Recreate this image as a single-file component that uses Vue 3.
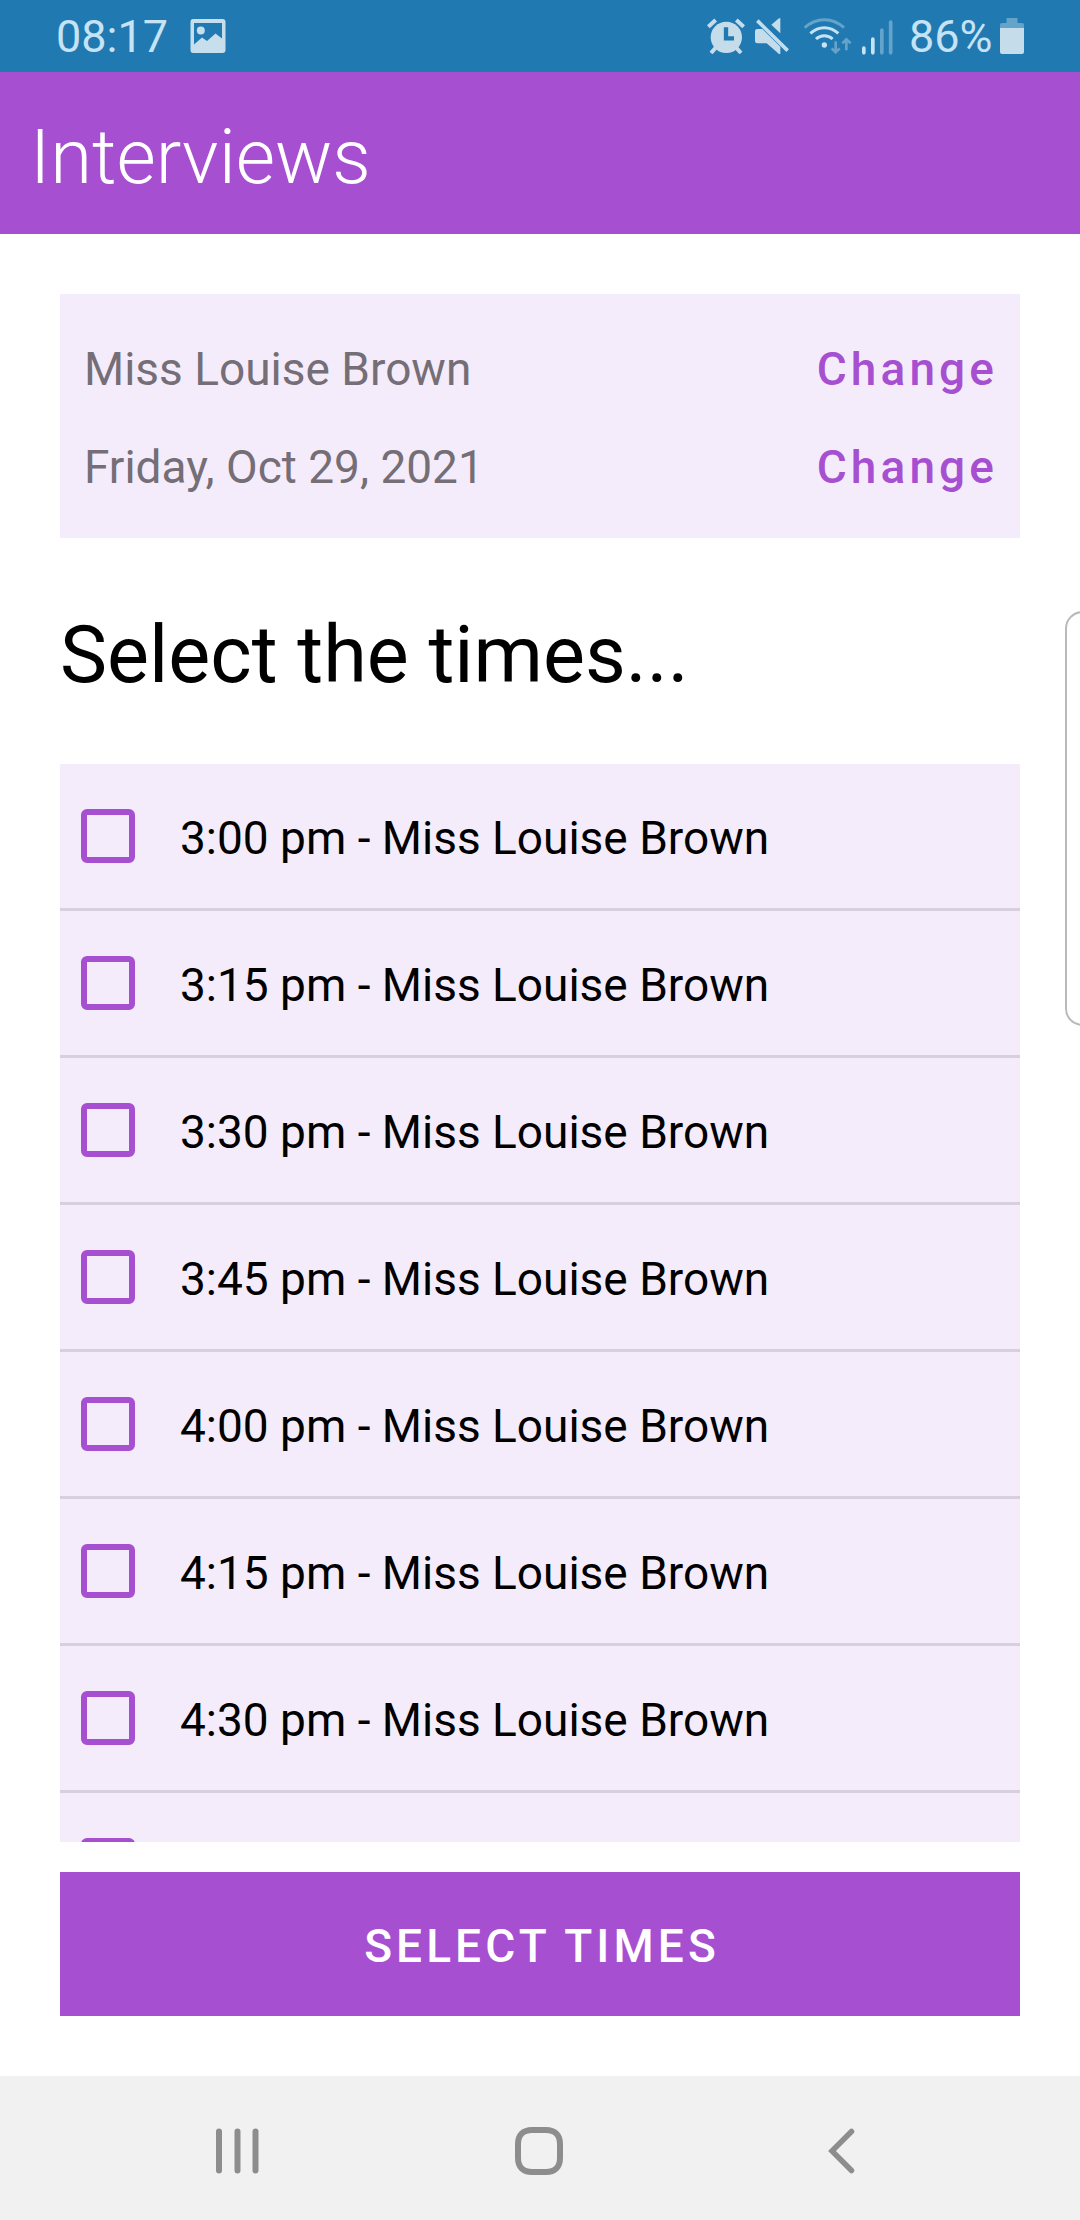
<script setup>
const details = ['Miss Louise Brown', 'Friday, Oct 29, 2021']
const slots = ['3:00', '3:15', '3:30', '3:45', '4:00', '4:15', '4:30', '']
</script>

<template>
  <div class="screen">
    <header class="status">
      <span class="clock">08:17</span>
      <svg class="picture" width="36" height="34" viewBox="0 0 36 34">
        <path fill="#c7deec" fill-rule="evenodd" d="M3 0H32.500Q35.500 0 35.500 3V31Q35.500 34 32.500 34H3Q.5 34 .5 31V3Q.5 0 3 0ZM4 4V25.500L12 18.500L17 22L25.500 14.500L32 19.500V4Z" />
        <circle cx="10.800" cy="11.500" r="4" fill="#c7deec" />
      </svg>
      <span class="grow"></span>
      <svg class="alarm" width="38" height="36" viewBox="51 53 114 108" fill="none" stroke="#c5dcea">
        <circle cx="109" cy="111" r="47" fill="#c5dcea" stroke="none" />
        <path stroke-width="12" d="M55 79L77 59M161 79L139 59M63 158L78 141M153 158L138 141" />
        <path stroke="#2179b1" stroke-width="13" d="M108 81V114H132" />
      </svg>
      <svg class="mute" width="34" height="36" viewBox="195 53 102 108">
        <path fill="#c5dcea" d="M202 86H217L271 139V161H267L230 129H202Q195 129 195 122V93Q195 86 202 86ZM267 54H271V99L244 73Z" />
        <path fill="none" stroke="#c5dcea" stroke-width="11" d="M202 61L293 151" />
      </svg>
      <svg class="wifi" width="48" height="36" viewBox="342 53 144 108" fill="none">
        <g stroke="#64a3ca" stroke-width="9">
          <path d="M344 82Q370 58 403 58T462 82" />
          <path d="M437 123V154M425 144L437 156L449 144M469 150V119M457 129L469 117L482 129" stroke-width="8" />
        </g>
        <g stroke="#c5e3f5" stroke-width="9">
          <path d="M361 99Q380 82 403 82T445 99M378 116Q389 106 403 106T428 116" />
        </g>
        <circle cx="403" cy="134" r="8" fill="#c5e3f5" />
      </svg>
      <svg class="signal" width="31" height="35" viewBox="515 59 93 104" stroke-width="11" stroke-linecap="round">
        <path stroke="#c5e3f5" d="M520.500 143V157M547.500 116V157" />
        <path stroke="#64a3ca" d="M574.500 89V157M601 65V157" />
      </svg>
      <span class="percent">86%</span>
      <svg class="battery" width="24" height="36" viewBox="0 0 24 36">
        <path fill="#64a3ca" d="M6.500 0H17.500V5H22Q24 5 24 7V10H0V7Q0 5 2 5H6.500Z" />
        <path fill="#c5dcea" d="M0 10H24V34Q24 36 22 36H2Q0 36 0 34Z" />
      </svg>
    </header>
    <div class="appbar"><h1>Interviews</h1></div>
    <main>
      <section class="card">
        <div v-for="d in details" :key="d" class="detail">
          <span>{{ d }}</span>
          <button class="change">Change</button>
        </div>
      </section>
      <h2><span>Select the times...</span></h2>
      <ul class="slots">
        <li v-for="s in slots" :key="s">
          <i class="box"></i>
          <span v-if="s">{{ s }} pm - Miss Louise Brown</span>
        </li>
      </ul>
      <button class="submit"><span>SELECT TIMES</span></button>
    </main>
    <nav>
      <svg class="recents" width="43" height="46" viewBox="0 0 43 46" stroke="#8d8d8d" stroke-width="6" stroke-linecap="round"><path d="M3 3.500V42.500M21.500 3.500V42.500M39.500 3.500V42.500" /></svg>
      <svg class="home" width="48" height="48" viewBox="0 0 48 48" fill="none" stroke="#8d8d8d" stroke-width="6"><path d="M17 3H31C40 3 45 8 45 17V31C45 40 40 45 31 45H17C8 45 3 40 3 31V17C3 8 8 3 17 3Z" /></svg>
      <svg width="27" height="46" viewBox="0 0 27 46" fill="none" stroke="#8d8d8d" stroke-width="5.500" stroke-linecap="round"><path d="M23.500 3.500L4 23L23.500 42.500" /></svg>
    </nav>
    <div class="edge"></div>
  </div>
</template>

<style>
body { margin: 0; background: #fff; }
</style>

<style scoped>
* { box-sizing: border-box; }
.screen {
  position: relative;
  width: 1080px;
  height: 2220px;
  overflow: hidden;
  display: flex;
  flex-direction: column;
  background: #fff;
  font-family: Roboto, "Liberation Sans", sans-serif;
  font-size: 46px;
  color: #000;
  white-space: nowrap;
}
button { border: 0; padding: 0; background: none; font: inherit; }
.status {
  height: 72px;
  flex: none;
  display: flex;
  align-items: center;
  padding: 0 56px;
  background: #2179b1;
  color: #c5e3f5;
}
.status svg { flex: none; }
.clock, .percent { font-size: 45px; line-height: 72px; padding-top: 2px; }
.clock { width: 134px; }
.grow { flex: 1; }
.alarm { margin-right: 10px; }
.mute { margin-right: 15px; }
.wifi { margin-right: 10px; }
.signal { margin: 2px 16px 0 0; }
.percent { width: 91px; }
.appbar {
  height: 162px;
  flex: none;
  display: flex;
  align-items: center;
  padding: 8px 0 0 30px;
  background: #a650d1;
}
h1 { margin: 0; font-size: 76px; font-weight: 300; color: #fff; }
main { flex: 1; display: flex; flex-direction: column; padding: 60px 60px 0; }
.card { height: 244px; padding: 26px 24px 0 24px; background: #f4ecfa; }
.detail { height: 98px; display: flex; align-items: center; justify-content: space-between; color: #756e77; }
.change { color: #a650d1; font-weight: 500; letter-spacing: 4.100px; margin-right: -2px; }
h2 { margin: 0; height: 226px; display: flex; align-items: center; padding-top: 8px; font-size: 79.200px; font-weight: 400; }
.slots { list-style: none; margin: 0; padding: 0; height: 1078px; overflow: hidden; background: #f4ecfa; }
li { height: 147px; display: flex; align-items: center; padding: 0 21px; border-bottom: 3px solid #d8cfde; }
.box { width: 54px; height: 54px; margin-right: 45px; border: 6px solid #a650d1; border-radius: 6px; }
li span { padding-top: 4px; }
.submit { height: 144px; margin-top: 30px; padding: 4px 0 0 4px; background: #a650d1; color: #fff; font-weight: 500; letter-spacing: 4.100px; }
nav { height: 144px; flex: none; display: flex; align-items: center; padding: 6px 0 0 216px; background: #f1f1f1; }
.recents { margin-right: 256px; }
.home { margin-right: 265px; }
.edge { position: absolute; right: -20px; top: 611px; width: 35px; height: 415px; border: 2px solid #b9b9b9; border-radius: 18px; background: #fff; }
</style>
